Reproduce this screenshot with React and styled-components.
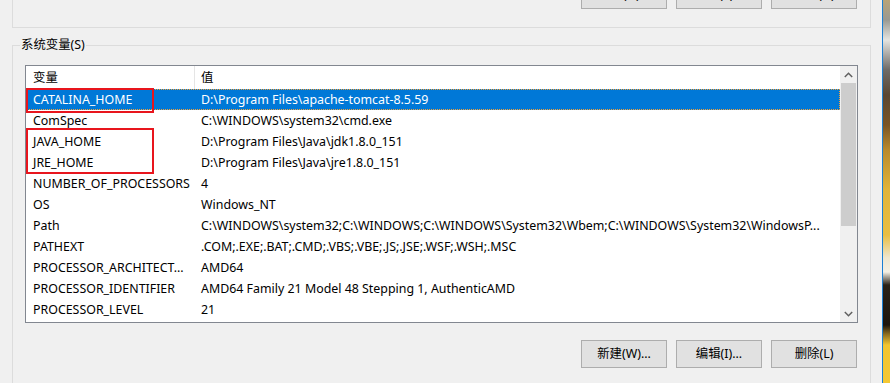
import React from "react";
import styled, { createGlobalStyle } from "styled-components";

const GlobalStyle = createGlobalStyle`
  html, body { margin: 0; padding: 0; background: #f0f0f0; overflow: hidden; }
  body {
    font-family: "Noto Sans", "Noto Sans CJK SC", sans-serif;
    font-size: 12.4px;
    color: #000;
  }
  * { box-sizing: border-box; }
`;

const Screen = styled.div`
  display: flex;
  width: 890px;
  height: 383px;
  overflow: hidden;
`;

const Dialog = styled.div`
  flex: 0 0 882px;
  height: 383px;
  background: #f0f0f0;
  padding: 0 11px 0 12px;
  display: flex;
  flex-direction: column;
  overflow: hidden;
  & > * { flex-shrink: 0; }
`;

const WindowEdge = styled.div`
  flex: 0 0 1px;
  background: #1a7fd4;
`;

const Wallpaper = styled.div`
  flex: 1;
  background: linear-gradient(
    to bottom,
    #b8a478 0px,
    #9a9a92 20px,
    #e4e4e0 40px,
    #6e6a66 70px,
    #5a4632 95px,
    #7a5424 125px,
    #b98a2c 150px,
    #e0b43a 190px,
    #e8be42 235px,
    #efe7cf 258px,
    #f4f0e4 272px,
    #2a2218 285px,
    #1c150e 325px,
    #8a6a1e 334px,
    #f2c530 345px,
    #f4c834 383px
  );
`;

const UpperGroup = styled.div`
  height: 28px;
  border: 1px solid #dcdcdc;
  border-top: none;
  overflow: hidden;
  display: flex;
  flex-direction: column;
`;

const ButtonRow = styled.div`
  display: flex;
  justify-content: flex-end;
  gap: 9px;
  flex-shrink: 0;
  margin-top: ${(p) => p.$offset || 0}px;
  padding-right: ${(p) => p.$right || 0}px;
`;

const Button = styled.button`
  width: 86px;
  height: 28px;
  background: #e1e1e1;
  border: 1px solid #adadad;
  border-radius: 0;
  font-family: inherit;
  font-size: 12.4px;
  color: #000;
  padding: 0;
  line-height: 26px;
`;

const GroupBox = styled.div`
  position: relative;
  margin-top: 17px;
  border: 1px solid #dcdcdc;
  padding: 19px 12px 40px 12px;
`;

const GroupTitle = styled.span`
  position: absolute;
  top: -9px;
  left: 7px;
  padding: 0 1px;
  line-height: 16px;
  background: #f0f0f0;
`;

const List = styled.div`
  position: relative;
  height: 258px;
  border: 1px solid #828790;
  background: #fff;
  display: flex;
`;

const ListMain = styled.div`
  flex: 1;
  min-width: 0;
  display: flex;
  flex-direction: column;
`;

const Header = styled.div`
  display: grid;
  grid-template-columns: 169px 1fr;
  height: 23px;
  flex-shrink: 0;
`;

const HeaderCell = styled.div`
  line-height: 23px;
  padding-left: ${(p) => (p.$first ? 7 : 6)}px;
  border-right: ${(p) => (p.$first ? "1px solid #e5e5e5" : "none")};
`;

const Row = styled.div`
  display: grid;
  grid-template-columns: 169px 1fr;
  height: 21px;
  flex-shrink: 0;
  padding-top: 1px;
  line-height: 20px;
  background: ${(p) => (p.$selected ? "#0078d7" : "transparent")};
  color: ${(p) => (p.$selected ? "#fff" : "#000")};
  outline: ${(p) => (p.$selected ? "1px dotted #f2a13a" : "none")};
  outline-offset: -1px;
`;

const Cell = styled.div`
  padding-left: ${(p) => (p.$first ? 7 : 6)}px;
  white-space: nowrap;
  overflow: hidden;
`;

const Scrollbar = styled.div`
  flex: 0 0 17px;
  background: #f0f0f0;
  display: flex;
  flex-direction: column;
`;

const ArrowBox = styled.div`
  height: 17px;
  flex-shrink: 0;
  display: flex;
  align-items: center;
  justify-content: center;
`;

const Thumb = styled.div`
  height: 143px;
  flex-shrink: 0;
  margin: 0 1px;
  background: #cdcdcd;
`;

const Track = styled.div`
  flex: 1;
`;

const RedBox = styled.div`
  position: absolute;
  left: 0;
  width: 128px;
  border: 2px solid #e8151d;
  pointer-events: none;
`;

const Chevron = ({ down }) => (
  <svg width="9" height="6" viewBox="0 0 9 6">
    <polyline
      points={down ? "0.8,1 4.5,4.7 8.2,1" : "0.8,5 4.5,1.3 8.2,5"}
      fill="none"
      stroke="#606060"
      strokeWidth="1.5"
    />
  </svg>
);

const rows = [
  ["CATALINA_HOME", "D:\\Program Files\\apache-tomcat-8.5.59"],
  ["ComSpec", "C:\\WINDOWS\\system32\\cmd.exe"],
  ["JAVA_HOME", "D:\\Program Files\\Java\\jdk1.8.0_151"],
  ["JRE_HOME", "D:\\Program Files\\Java\\jre1.8.0_151"],
  ["NUMBER_OF_PROCESSORS", "4"],
  ["OS", "Windows_NT"],
  [
    "Path",
    "C:\\WINDOWS\\system32;C:\\WINDOWS;C:\\WINDOWS\\System32\\Wbem;C:\\WINDOWS\\System32\\WindowsP...",
  ],
  ["PATHEXT", ".COM;.EXE;.BAT;.CMD;.VBS;.VBE;.JS;.JSE;.WSF;.WSH;.MSC"],
  ["PROCESSOR_ARCHITECT...", "AMD64"],
  ["PROCESSOR_IDENTIFIER", "AMD64 Family 21 Model 48 Stepping 1, AuthenticAMD"],
  ["PROCESSOR_LEVEL", "21"],
];

export default function App() {
  return (
    <>
      <GlobalStyle />
      <Screen>
        <Dialog>
          <UpperGroup>
            <ButtonRow $offset={-19} $right={13}>
              <Button>新建(N)...</Button>
              <Button>编辑(E)...</Button>
              <Button>删除(D)</Button>
            </ButtonRow>
          </UpperGroup>
          <GroupBox>
            <GroupTitle>系统变量(S)</GroupTitle>
            <List>
              <ListMain>
                <Header>
                  <HeaderCell $first>变量</HeaderCell>
                  <HeaderCell>值</HeaderCell>
                </Header>
                {rows.map(([name, value], i) => (
                  <Row key={name} $selected={i === 0}>
                    <Cell $first>{name}</Cell>
                    <Cell>{value}</Cell>
                  </Row>
                ))}
              </ListMain>
              <Scrollbar>
                <ArrowBox>
                  <Chevron />
                </ArrowBox>
                <Thumb />
                <Track />
                <ArrowBox>
                  <Chevron down />
                </ArrowBox>
              </Scrollbar>
              <RedBox style={{ top: 22, height: 25 }} />
              <RedBox style={{ top: 62, height: 46 }} />
            </List>
            <ButtonRow $offset={17} $right={1}>
              <Button>新建(W)...</Button>
              <Button>编辑(I)...</Button>
              <Button>删除(L)</Button>
            </ButtonRow>
          </GroupBox>
        </Dialog>
        <WindowEdge />
        <Wallpaper />
      </Screen>
    </>
  );
}
